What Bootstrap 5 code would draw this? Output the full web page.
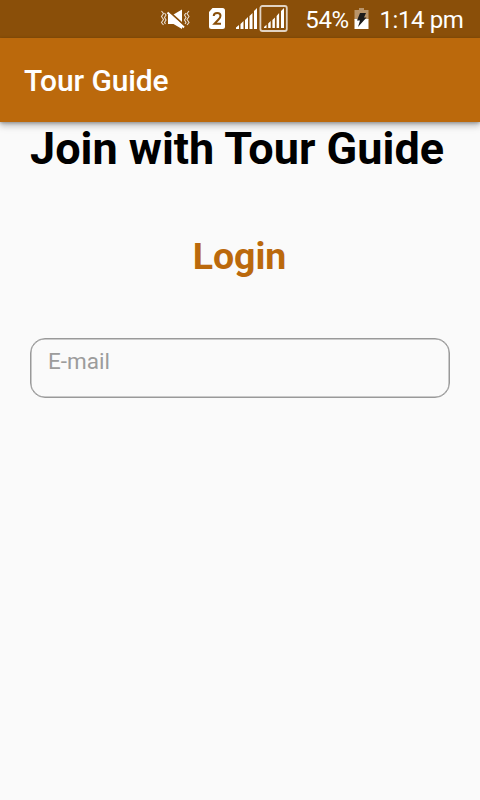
<!DOCTYPE html>
<html lang="en">
<head>
<meta charset="utf-8">
<meta name="viewport" content="width=device-width, initial-scale=1">
<title>Tour Guide</title>
<link href="https://cdn.jsdelivr.net/npm/bootstrap@5.3.0/dist/css/bootstrap.min.css" rel="stylesheet">
<style>
body { font-family: Roboto, sans-serif; background: #fafafa; color: #000; }
.status-bar { height: 38px; background: #8a4f09; font-size: 24px; line-height: 38px; padding-right: 16.5px; white-space: nowrap; }
.status-text { letter-spacing: -.4px; padding-top: 1px; height: 38px; }
.app-bar { height: 84px; background: #bb690c; padding: 2px 24px 0; box-shadow: 0 3px 6px rgba(0,0,0,.2), 0 6px 7px rgba(0,0,0,.07), 0 1px 3px rgba(0,0,0,.25); }
.app-title { font-size: 30px; font-weight: 500; line-height: 36px; letter-spacing: -.12px; color: #fff; }
.content { padding: 0 30px; }
.join-title { font-size: 45px; font-weight: 700; line-height: 53px; white-space: nowrap; }
.login-title { font-size: 37.5px; font-weight: 700; line-height: 44px; letter-spacing: -.1px; color: #bb690c; margin: 59px 1px 0 0; }
.email-field, .email-field:focus { height: 60px; margin-top: 60px; padding: 0 17px 14px; font-size: 22.5px; border: 1px solid #999; border-radius: 15px; background: transparent; box-shadow: inset 0 0 0 .5px #999; }
.email-field::placeholder { color: #9c9c9c; }
.battery { margin: 0 10.5px 0 5.35px; }
.status-icons { margin-right: 15px; }
</style>
</head>
<body>
<header>
  <div class="status-bar d-flex justify-content-end align-items-center text-white">
    <svg class="status-icons" width="130" height="38" viewBox="160 0 130 38" aria-hidden="true">
      <!-- muted speaker with vibration waves -->
      <path d="M161.5 11l2 2.5-2 3 2 3-2 3 2 2.500M164.500 13l1.500 2-1.500 2.500 1.500 2.500-1.500 2.500 1 1.500M189 11l-2 2.500 2 3-2 3 2 3-2 2.500M186 13l-1.500 2 1.500 2.500-1.500 2.500 1.500 2.500-1 1.500" fill="none" stroke="#e9ddd0" stroke-width="1.100"/>
      <path d="M168 14.500h5.500L182 9.500v19.500l-8.500-5H168z" fill="#fff"/>
      <path d="M168.500 11L185 26" stroke="#8a4f09" stroke-width="1.800"/>
      <path d="M167.500 12.500L184 27.500" stroke="#fff" stroke-width="2"/>
      <!-- second SIM -->
      <path d="M212.500 8H222.500Q225 8 225 10.500V26.500Q225 29 222.500 29H211.500Q209 29 209 26.500V12z" fill="#fff"/>
      <path d="M213.700 16Q213.800 13 217.200 13Q220.500 13 220.500 15.800Q220.500 17.500 218.500 19.500L214.500 23.700H221" fill="none" stroke="#8a4f09" stroke-width="2"/>
      <!-- signal strength -->
      <path d="M236 29v-1.500l3-2.500v4zM240.500 29v-5l3-3v8zM245 29v-9l3-3v12zM249.500 29v-13l3-3v16zM254 29V11l3-3v21z" fill="#fff"/>
      <rect x="260.400" y="6" width="26.400" height="25" rx="2" fill="none" stroke="#e2d3c2" stroke-width="1.800"/>
      <path d="M264 28v-1l2.500-2.300V28zM268.200 28v-4.500l2.500-2.500v7zM272.400 28v-8l2.500-2.500V28zM276.600 28V16l2.500-3v15zM281 28V11l3-3v20z" fill="#fff"/>
    </svg>
    <span class="status-text">54%</span>
    <svg class="battery" width="15" height="38" viewBox="0 0 15 38" aria-hidden="true">
      <path d="M5 8h5v2h4.500v10H.5V10H5z" fill="#b9956b"/>
      <path d="M.5 19h14v10H.5z" fill="#fff"/>
      <path d="M6 13h6l-2 4.500h2.500L4 27l2-6.500H3z" fill="#1b1b1b"/>
    </svg>
    <span class="status-text">1:14 pm</span>
  </div>
  <nav class="app-bar d-flex align-items-center position-relative">
    <span class="app-title">Tour Guide</span>
  </nav>
</header>
<main class="content">
  <h1 class="join-title mb-0">Join with Tour Guide</h1>
  <h2 class="login-title text-center">Login</h2>
  <input type="email" class="form-control email-field" placeholder="E-mail" aria-label="E-mail">
</main>
<script src="https://cdn.jsdelivr.net/npm/bootstrap@5.3.0/dist/js/bootstrap.bundle.min.js"></script>
</body>
</html>
